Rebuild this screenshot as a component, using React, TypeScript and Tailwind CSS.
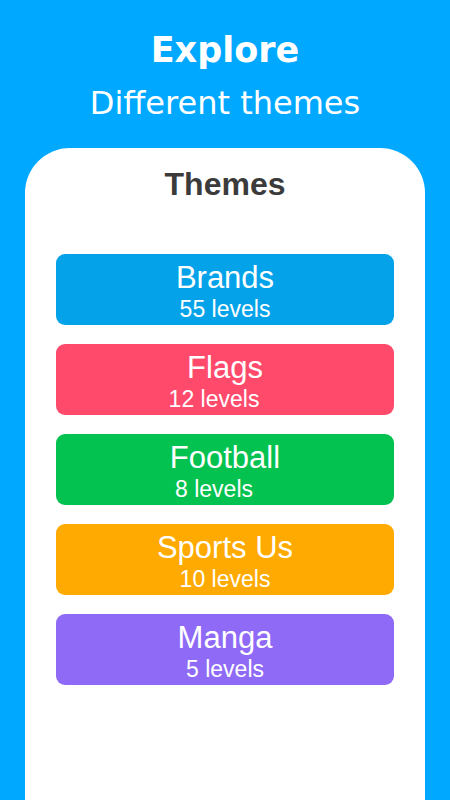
import React from "react";

type Theme = {
    name: string;
    levels: number;
    color: string;
    subShift: string;
};

const themes: Theme[] = [
    { name: "Brands", levels: 55, color: "bg-[#04a3e9]", subShift: "" },
    { name: "Flags", levels: 12, color: "bg-[#ff4a6b]", subShift: "pr-[22px]" },
    { name: "Football", levels: 8, color: "bg-[#03c24f]", subShift: "pr-[22px]" },
    { name: "Sports Us", levels: 10, color: "bg-[#ffaa00]", subShift: "" },
    { name: "Manga", levels: 5, color: "bg-[#8e6af6]", subShift: "" },
];

const ThemeButton = ({ theme }: { theme: Theme }) => (
    <button
        className={`${theme.color} h-[71px] w-full rounded-[9px] pt-[4px] flex flex-col items-center justify-center text-white cursor-pointer`}
        style={{ fontFamily: '"Liberation Sans", Arial, sans-serif' }}
    >
        <span className="text-[31px] leading-[32px]">{theme.name}</span>
        <span className={`mt-[2px] text-[23px] leading-[26px] ${theme.subShift}`}>
            {theme.levels} levels
        </span>
    </button>
);

const App = () => {
    return (
        <div className="h-[800px] w-full bg-[#00a9ff] flex flex-col items-center overflow-hidden">
            <div
                className="flex flex-col items-center text-white"
                style={{ fontFamily: '"DejaVu Sans", sans-serif' }}
            >
                <h1 className="mt-[30px] text-[35px] leading-[40px] font-bold">Explore</h1>
                <p className="mt-[13px] text-[32px] leading-[40px]">Different themes</p>
            </div>

            <div className="mt-[25px] w-[400px] flex-1 bg-white rounded-t-[45px] flex flex-col items-center pt-[16px]">
                <h2
                    className="text-[32px] leading-[40px] font-bold text-[#3b3b3b]"
                    style={{ fontFamily: '"Liberation Sans", Arial, sans-serif' }}
                >
                    Themes
                </h2>
                <div className="mt-[50px] w-[338px] flex flex-col gap-[19px]">
                    {themes.map((t) => (
                        <ThemeButton key={t.name} theme={t} />
                    ))}
                </div>
            </div>
        </div>
    );
};

export default App;
